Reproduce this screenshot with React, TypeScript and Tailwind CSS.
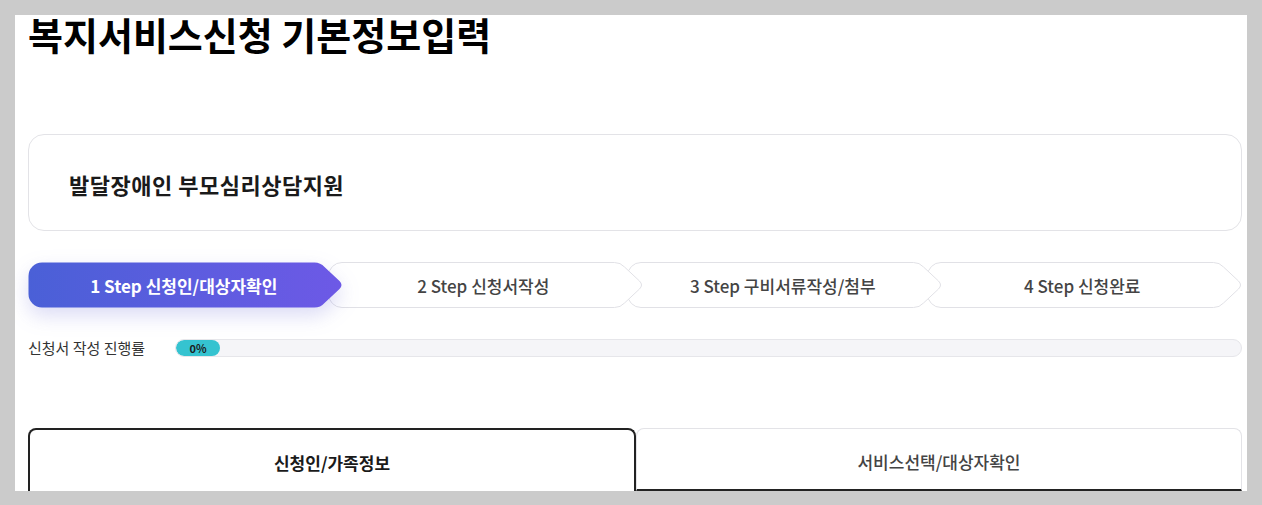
import React from "react";

const FONT = { fontFamily: '"Noto Sans CJK KR", "Noto Sans KR", sans-serif' };

const steps = [
  "1 Step 신청인/대상자확인",
  "2 Step 신청서작성",
  "3 Step 구비서류작성/첨부",
  "4 Step 신청완료",
];

const zIndex = ["z-40", "z-30", "z-20", "z-10"];

// chevron shape, local 316x46 box
const SHAPE =
  "M 14 0.5 H 287 Q 293 0.5 297 5 L 312 19 Q 316 23 312 27 L 297 41 Q 293 45.5 287 45.5 H 14 A 13.5 13.5 0 0 1 0.5 32 V 14 A 13.5 13.5 0 0 1 14 0.5 Z";

function Step({ label, index }: { label: string; index: number }) {
  const active = index === 0;
  return (
    <div
      className={`relative flex-1 h-[46px] flex items-center justify-center ${zIndex[index]} ${
        index > 0 ? "-ml-4" : ""
      }`}
    >
      <svg
        className={`absolute inset-0 w-full h-full ${
          active ? "drop-shadow-[0_8px_10px_rgba(90,90,210,0.22)]" : ""
        }`}
        viewBox="0 0 316 46"
        preserveAspectRatio="none"
      >
        <defs>
          <linearGradient id="stepGrad" x1="0" y1="0" x2="1" y2="0">
            <stop offset="0%" stopColor="#4a60d7" />
            <stop offset="100%" stopColor="#6d59e6" />
          </linearGradient>
        </defs>
        {active ? (
          <path d={SHAPE} fill="url(#stepGrad)" />
        ) : (
          <path d={SHAPE} fill="#ffffff" stroke="#e1e1e6" strokeWidth="1" />
        )}
      </svg>
      <span
        className={`relative pr-1 text-[17px] leading-none ${
          active ? "text-white font-bold" : "text-[#444] font-medium"
        }`}
      >
        {label}
      </span>
    </div>
  );
}

export default function App() {
  return (
    <div className="w-[1262px] h-[505px] bg-[#cbcbcb] p-[15px] pb-[14px]" style={FONT}>
      <div className="h-full bg-white overflow-hidden pl-[13px] pr-[5px]">
        {/* page title */}
        <h1 className="text-[38px] leading-[38px] font-bold text-black">
          복지서비스신청 기본정보입력
        </h1>

        {/* service name card */}
        <div className="mt-[81px] h-[97px] rounded-[16px] border border-[#e3e3e7] flex items-center pl-[40px] pt-[4px]">
          <p className="text-[22px] font-bold text-[#1a1a1a] tracking-[0.5px]">
            발달장애인 부모심리상담지원
          </p>
        </div>

        {/* step bar */}
        <div className="mt-[31px] flex">
          {steps.map((s, i) => (
            <Step key={s} label={s} index={i} />
          ))}
        </div>

        {/* progress */}
        <div className="mt-[31px] flex items-center h-[18px]">
          <span className="w-[147px] shrink-0 text-[15px] text-[#333]">신청서 작성 진행률</span>
          <div className="flex-1 h-[18px] rounded-full bg-[#f5f5f8] border border-[#e6e6ea] overflow-hidden">
            <div className="w-[44px] h-full rounded-full bg-[#35c3d0] flex items-center justify-center">
              <span className="text-[11px] font-bold text-[#1d1d1d] leading-none">0%</span>
            </div>
          </div>
        </div>

        {/* tabs */}
        <div className="mt-[71px] flex h-[63px]">
          <div className="flex-1 rounded-t-[8px] border-2 border-b-0 border-[#222] flex items-center justify-center pt-[5px]">
            <span className="text-[17px] font-bold text-[#1a1a1a]">신청인/가족정보</span>
          </div>
          <div className="flex-1 rounded-t-[8px] border border-[#e3e3e7] border-b-2 border-b-[#222] flex items-center justify-center pt-[5px]">
            <span className="text-[17px] font-medium text-[#444]">서비스선택/대상자확인</span>
          </div>
        </div>
      </div>
    </div>
  );
}
